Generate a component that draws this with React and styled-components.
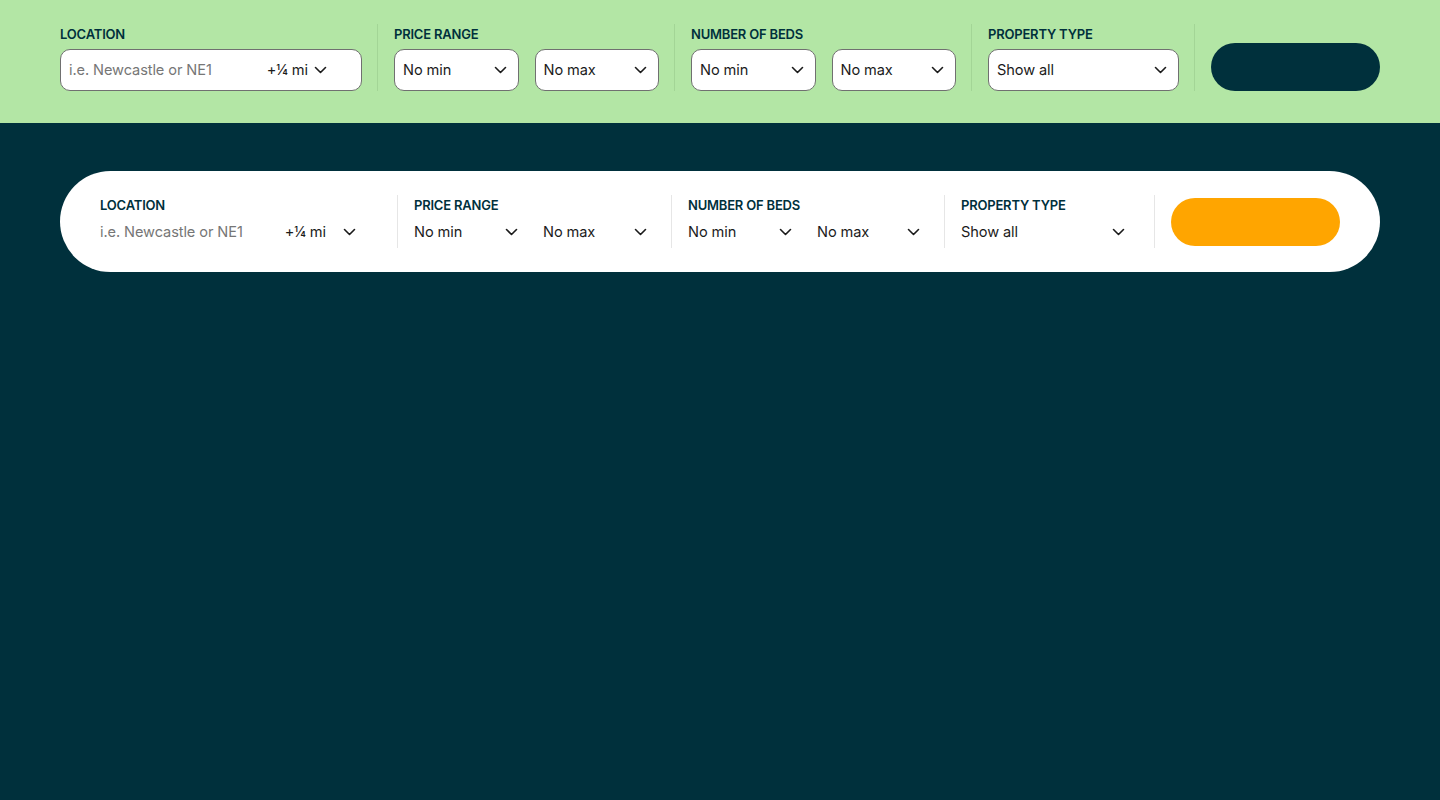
import React from 'react'
import styled, { createGlobalStyle } from 'styled-components'

const GlobalStyle = createGlobalStyle`
  html, body {
    margin: 0;
    padding: 0;
    background: #00303c;
    font-family: Inter, "Noto Sans", Arial, sans-serif;
  }
  #root {
    min-height: 800px;
  }
`

const Page = styled.div`
  min-height: 800px;
  background: #00303c;
`

const TopBand = styled.section`
  background: #b3e6a5;
  padding: 24px 60px 32px;
  height: 123px;
  box-sizing: border-box;
`

const Row = styled.div`
  display: flex;
  align-items: stretch;
`

const Group = styled.div`
  width: ${p => p.$w}px;
  flex: none;
  display: flex;
  flex-direction: column;
  padding-top: ${p => p.$pt || 0}px;
`

const Label = styled.div`
  font-size: 13px;
  font-weight: 600;
  line-height: 16px;
  letter-spacing: -0.2px;
  color: #00303c;
  text-transform: uppercase;
  margin-bottom: ${p => (p.$tight ? 8 : 7)}px;
`

const Fields = styled.div`
  display: flex;
  gap: ${p => p.$gap}px;
`

const Divider = styled.div`
  width: 1px;
  flex: none;
  background: ${p => (p.$light ? '#e6e6e6' : '#a3d596')};
  margin: 0 ${p => p.$right}px 0 ${p => p.$left}px;
`

const Box = styled.div`
  box-sizing: border-box;
  height: 42px;
  flex: 1;
  display: flex;
  align-items: center;
  background: #fff;
  border: 1px solid #707070;
  border-radius: 10px;
  padding: 0 11px 0 8px;
  font-size: 14.6px;
  letter-spacing: -0.1px;
  color: #1b1b1b;
`

const Plain = styled.div`
  box-sizing: border-box;
  height: 22px;
  width: ${p => p.$w}px;
  flex: none;
  display: flex;
  align-items: center;
  padding-right: ${p => p.$pr || 0}px;
  font-size: 14.6px;
  letter-spacing: -0.1px;
  color: #1b1b1b;
`

const Value = styled.span`
  flex: 1;
  white-space: nowrap;
`

const Placeholder = styled.span`
  flex: 1;
  white-space: nowrap;
  color: #767676;
`

const Radius = styled.span`
  display: flex;
  align-items: center;
  gap: ${p => p.$gap}px;
  margin-right: ${p => p.$mr}px;
  white-space: nowrap;
`

const Pill = styled.section`
  margin: 48px 60px 0;
  height: 101px;
  box-sizing: border-box;
  background: #fff;
  border-radius: 51px;
  padding: 24px 40px;
  display: flex;
  align-items: stretch;
`

const Button = styled.button`
  width: 169px;
  height: 48px;
  flex: none;
  align-self: ${p => p.$align};
  border: none;
  border-radius: 24px;
  background: ${p => p.$bg};
  cursor: pointer;
`

const Chevron = () => (
  <svg width="13" height="8" viewBox="0 0 13 8" fill="none">
    <path d="M1.5 1.5l5 5 5-5" stroke="#1b1b1b" strokeWidth="1.6" strokeLinecap="round" strokeLinejoin="round" />
  </svg>
)

const TopSearch = () => (
  <TopBand>
    <Row>
      <Group $w={302} $pt={2}>
        <Label>Location</Label>
        <Box>
          <Placeholder>i.e. Newcastle or NE1</Placeholder>
          <Radius $gap={6} $mr={23}>+¼ mi <Chevron /></Radius>
        </Box>
      </Group>
      <Divider $left={15} $right={16} />
      <Group $w={265} $pt={2}>
        <Label>Price range</Label>
        <Fields $gap={16}>
          <Box><Value>No min</Value><Chevron /></Box>
          <Box><Value>No max</Value><Chevron /></Box>
        </Fields>
      </Group>
      <Divider $left={15} $right={16} />
      <Group $w={265} $pt={2}>
        <Label>Number of beds</Label>
        <Fields $gap={16}>
          <Box><Value>No min</Value><Chevron /></Box>
          <Box><Value>No max</Value><Chevron /></Box>
        </Fields>
      </Group>
      <Divider $left={15} $right={16} />
      <Group $w={191} $pt={2}>
        <Label>Property type</Label>
        <Box><Value>Show all</Value><Chevron /></Box>
      </Group>
      <Divider $left={15} $right={16} />
      <Button $bg="#00303c" $align="flex-end" aria-label="Search" />
    </Row>
  </TopBand>
)

const PillSearch = () => (
  <Pill>
    <Group $w={281} $pt={2}>
      <Label $tight>Location</Label>
      <Plain $w={281} $pr={25}>
        <Placeholder>i.e. Newcastle or NE1</Placeholder>
        <Radius $gap={17} $mr={0}>+¼ mi <Chevron /></Radius>
      </Plain>
    </Group>
    <Divider $light $left={16} $right={16} />
    <Group $w={241} $pt={2}>
      <Label $tight>Price range</Label>
      <Fields $gap={13}>
        <Plain $w={116} $pr={12}><Value>No min</Value><Chevron /></Plain>
        <Plain $w={112} $pr={8}><Value>No max</Value><Chevron /></Plain>
      </Fields>
    </Group>
    <Divider $light $left={16} $right={16} />
    <Group $w={240} $pt={2}>
      <Label $tight>Number of beds</Label>
      <Fields $gap={13}>
        <Plain $w={116} $pr={12}><Value>No min</Value><Chevron /></Plain>
        <Plain $w={111} $pr={8}><Value>No max</Value><Chevron /></Plain>
      </Fields>
    </Group>
    <Divider $light $left={16} $right={16} />
    <Group $w={177} $pt={2}>
      <Label $tight>Property type</Label>
      <Plain $w={177} $pr={13}><Value>Show all</Value><Chevron /></Plain>
    </Group>
    <Divider $light $left={16} $right={16} />
    <Button $bg="#ffa500" $align="center" aria-label="Search" />
  </Pill>
)

const App = () => (
  <Page>
    <GlobalStyle />
    <TopSearch />
    <PillSearch />
  </Page>
)

export default App
